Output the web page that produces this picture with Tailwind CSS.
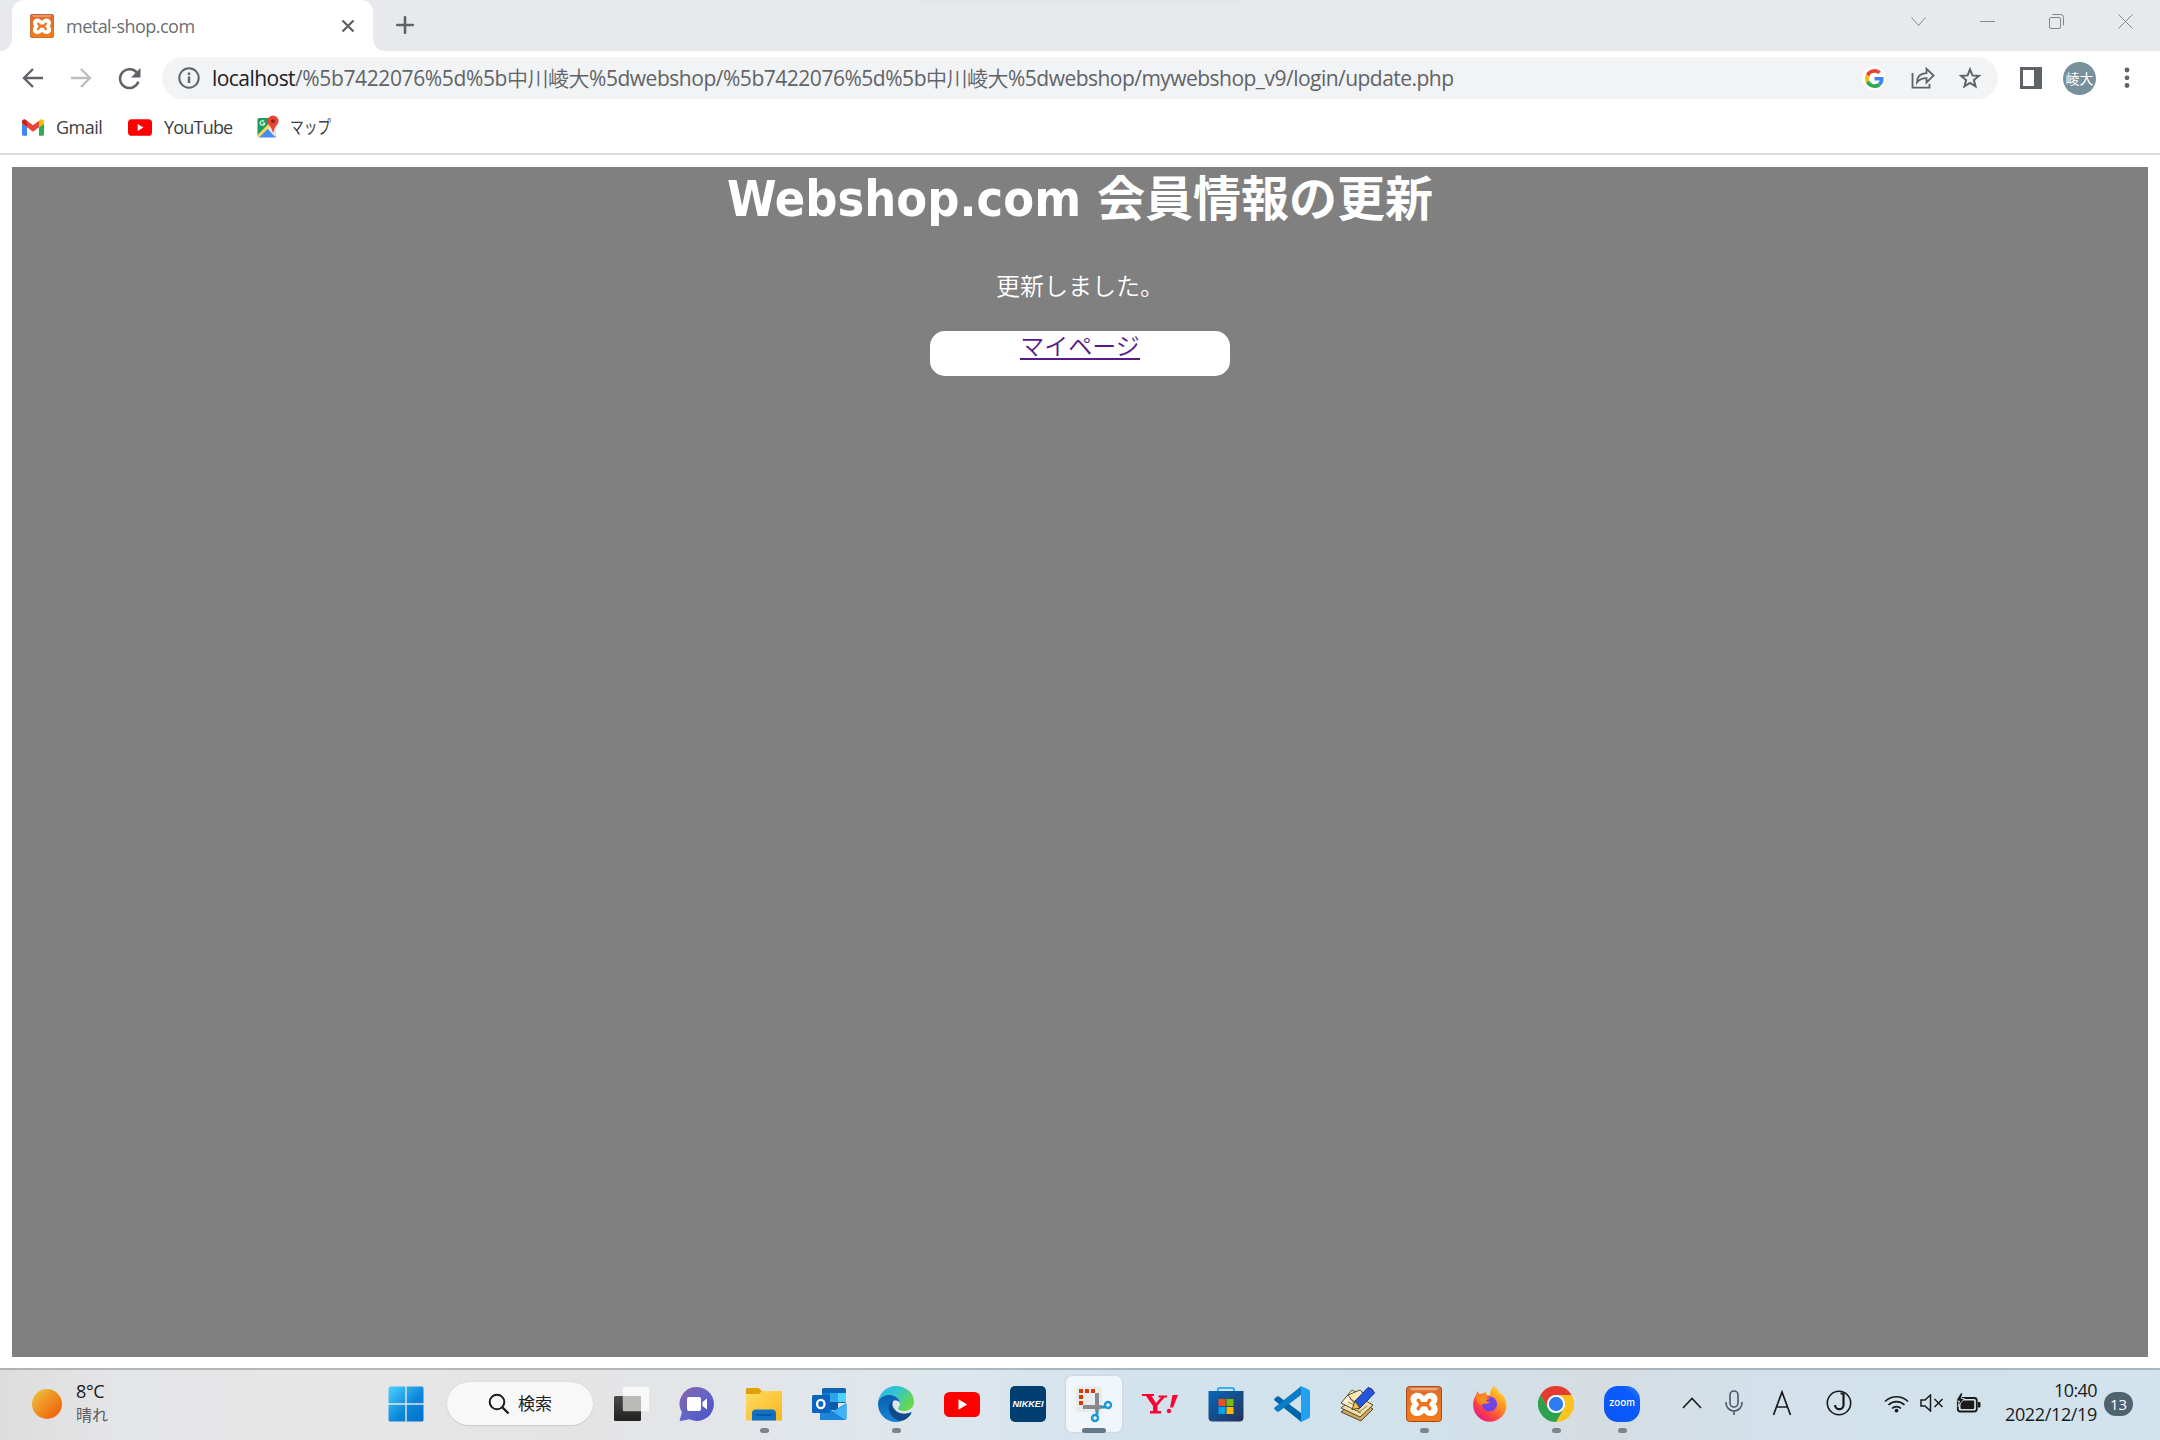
<!DOCTYPE html>
<html lang="ja">
<head>
<meta charset="utf-8">
<title>metal-shop.com</title>
<script src="https://cdn.jsdelivr.net/npm/@tailwindcss/browser@4"></script>
</head>
<body class="w-[2160px] h-[1440px] overflow-hidden flex flex-col bg-white font-['Open_Sans','Noto_Sans_CJK_JP',sans-serif]">

<svg class="absolute size-0">
  <defs>
    <linearGradient id="sun" x1="0" y1="0" x2="1" y2="1"><stop offset=".1" stop-color="#eebb38"/><stop offset=".8" stop-color="#f16a10"/></linearGradient>
    <linearGradient id="win" x1="0" y1="0" x2="1" y2="1"><stop offset="0" stop-color="#4cd0ff"/><stop offset=".6" stop-color="#0a84d8"/><stop offset="1" stop-color="#0070ca"/></linearGradient>
    <linearGradient id="chat" x1="0" y1="0" x2="1" y2="1"><stop offset="0" stop-color="#8f63a8"/><stop offset=".5" stop-color="#6264c8"/><stop offset="1" stop-color="#4a50c8"/></linearGradient>
    <linearGradient id="tv" x1="0" y1="0" x2="0" y2="1"><stop offset="0" stop-color="#4a4a48"/><stop offset="1" stop-color="#20201e"/></linearGradient>
    <linearGradient id="fold" x1="0" y1="0" x2="1" y2="1"><stop offset="0" stop-color="#ffdb66"/><stop offset="1" stop-color="#f8b71a"/></linearGradient>
    <linearGradient id="edgeTop" x1="0" y1="0" x2="1" y2=".5"><stop offset="0" stop-color="#2ab3ea"/><stop offset=".5" stop-color="#33c4d2"/><stop offset="1" stop-color="#66d94c"/></linearGradient>
    <linearGradient id="edgeMid" x1="0" y1="0" x2="0" y2="1"><stop offset="0" stop-color="#0d5cab"/><stop offset="1" stop-color="#1187dd"/></linearGradient>
    <linearGradient id="store" x1="0" y1="0" x2="1" y2="1"><stop offset="0" stop-color="#0468b8"/><stop offset="1" stop-color="#29305a"/></linearGradient>
    <linearGradient id="xa" x1="0" y1="0" x2="0" y2="1"><stop offset="0" stop-color="#d5713a"/><stop offset=".3" stop-color="#e8701e"/><stop offset="1" stop-color="#f47c1c"/></linearGradient>
    <linearGradient id="ff" x1="1" y1="0" x2=".2" y2="1"><stop offset="0" stop-color="#fff148"/><stop offset=".4" stop-color="#ff9a20"/><stop offset=".7" stop-color="#ff4a3c"/><stop offset="1" stop-color="#e8148a"/></linearGradient>
    <linearGradient id="zm" x1="1" y1="0" x2="0" y2="1"><stop offset="0" stop-color="#3f84e8"/><stop offset=".25" stop-color="#0b5cff"/><stop offset="1" stop-color="#0956f2"/></linearGradient>
    <symbol id="xampp" viewBox="0 0 36 36">
      <rect x=".5" y=".5" width="35" height="35" rx="3" fill="url(#xa)" stroke="#a84a14"/>
      <path d="M3.500 1.800h29l-2 2.500h-25z" fill="#f3a47c"/>
      <path d="M11.500 6.800c3 0 4.500 1.400 6.500 3.500c2-2.100 3.500-3.500 6.500-3.500c4 0 7 2.700 7 6.200c0 2.300-1 3.700-1.800 5.200c1.200 1.400 2 3 2 5.300c0 3.800-3 6.500-6.800 6.500c-3 0-5-1.200-6.900-3.300c-2 2.100-4 3.300-6.800 3.300c-3.900 0-6.900-2.700-6.900-6.500c0-2.300.8-3.900 2-5.300c-.9-1.500-1.800-2.900-1.800-5.200c0-3.500 3-6.200 7-6.200z" fill="#fff"/>
      <path d="M12.500 12.600c1.800 0 1.800 3.300 3.200 3.300h4.600c1.400 0 1.400-3.300 3.200-3.300c2.500 0 2.500 3 .6 3.800c-1.200.6-1.200 3.200 0 3.800c1.900 1 1.900 4.200-.6 4.200c-1.800 0-1.800-3.900-3.200-3.900h-4.600c-1.400 0-1.400 3.900-3.200 3.900c-2.500 0-2.500-3.200-.6-4.200c1.200-.6 1.200-3.200 0-3.800c-1.900-.8-1.900-3.800.6-3.800z" fill="#ee7420"/>
    </symbol>
    <symbol id="ytlogo" viewBox="0 0 36 25">
      <rect width="36" height="25" rx="5.500" fill="#f00"/><path d="M14.500 7.300v10.400l8.700-5.200z" fill="#fff"/>
    </symbol>
  </defs>
</svg>

<!-- tab strip -->
<header class="h-[51px] shrink-0 bg-[#e8e9ed] flex items-stretch relative">
  <div class="w-3 bg-white"><div class="h-full bg-[#e8e9ed] rounded-br-[12px]"></div></div>
  <div class="w-[361px] bg-white rounded-t-[12px] flex items-center pl-[18px] pr-[17px]">
    <svg class="size-6"><use href="#xampp"/></svg>
    <span class="ml-3 text-[18px] leading-6 tracking-[-0.52px] text-[#6b6e72] whitespace-nowrap">metal-shop.com</span>
    <svg class="ml-auto size-[16px]" viewBox="0 0 16 16" stroke="#5f6368" stroke-width="2.300"><path d="M2.500 2.500l11 11M13.500 2.500l-11 11"/></svg>
  </div>
  <div class="w-3 bg-white"><div class="h-full bg-[#e8e9ed] rounded-bl-[12px]"></div></div>
  <svg class="ml-[11px] mt-4 size-[18px]" viewBox="0 0 18 18" stroke="#5f6368" stroke-width="2.600" stroke-linecap="round"><path d="M9 1.200v15.600M1.200 9h15.600"/></svg>
  <div class="absolute left-[918px] top-0 w-[324px] h-[3px] bg-[#e4e5e9]"></div>
  <div class="ml-auto flex items-start pt-[14px] pr-[27px] gap-[54px]">
    <svg class="w-[15px] h-4" viewBox="0 0 15 16" fill="none" stroke="#85878b"><path d="M.5 3.500l7 8 7-8"/></svg>
    <svg class="w-[15px] h-4" viewBox="0 0 15 16" fill="none" stroke="#85878b"><path d="M0 7.500h15"/></svg>
    <svg class="w-[15px] h-4" viewBox="0 0 15 16" fill="none" stroke="#85878b"><rect x=".5" y="3.500" width="11" height="11" rx="1.500"/><path d="M3.500 .5h8a3 3 0 0 1 3 3v8"/></svg>
    <svg class="w-[15px] h-4" viewBox="0 0 15 16" fill="none" stroke="#85878b"><path d="M.5.500l14 14M14.500 .5l-14 14"/></svg>
  </div>
</header>

<!-- toolbar -->
<div class="h-[54px] shrink-0 flex items-center pl-[22px]">
  <svg class="size-[22px]" viewBox="0 0 22 22" fill="none" stroke="#5f6368" stroke-width="2.400"><path d="M21 11H3M11 2l-9 9 9 9"/></svg>
  <svg class="ml-[26px] size-[22px]" viewBox="0 0 22 22" fill="none" stroke="#bcbec0" stroke-width="2.400"><path d="M1 11h18M11 2l9 9-9 9"/></svg>
  <svg class="ml-[26px] size-[23px]" viewBox="0 0 22 22" fill="none" stroke="#5f6368" stroke-width="2.400"><path d="M18.700 6.500A9 9 0 1 0 19.500 14"/><path d="M21.500 1v9h-9z" fill="#5f6368" stroke="none"/></svg>
  <div class="ml-[21px] w-[1836px] h-[42px] rounded-full bg-[#f1f3f4] flex items-center pl-4">
    <svg class="size-[22px] shrink-0" viewBox="0 0 22 22" fill="none" stroke="#5f6368" stroke-width="2"><circle cx="11" cy="11" r="9.700"/><path d="M11 9.500v6.500M11 5.500v2.400" stroke-width="2.400"/></svg>
    <div class="ml-[12px] flex text-[21px] leading-[30px] text-[#5f6368] whitespace-pre">
      <span class="tracking-[-0.55px] text-[#202124]">localhost</span>
      <span class="tracking-[-0.377px]">/%5b7422076%5d%5b</span>
      <span class="tracking-[-0.5px] font-[350]">中川崚大</span>
      <span class="tracking-[-0.478px]">%5dwebshop/%5b7422076%5d%5b</span>
      <span class="tracking-[-0.5px] font-[350]">中川崚大</span>
      <span class="tracking-[-0.53px]">%5dwebshop/mywebshop_v9/login/update.php</span>
    </div>
    <div class="ml-auto mr-[16px] flex items-center">
      <div class="size-6 rounded-full bg-white flex items-center justify-center">
        <svg class="size-[19px]" viewBox="0 0 48 48"><path fill="#EA4335" d="M24 9.500c3.540 0 6.710 1.220 9.210 3.600l6.850-6.850C35.900 2.380 30.470 0 24 0 14.620 0 6.510 5.380 2.560 13.220l7.980 6.190C12.430 13.720 17.740 9.500 24 9.500z"/><path fill="#4285F4" d="M46.980 24.550c0-1.570-.15-3.090-.38-4.550H24v9.020h12.940c-.58 2.960-2.260 5.480-4.780 7.180l7.730 6c4.510-4.180 7.090-10.360 7.090-17.650z"/><path fill="#FBBC05" d="M10.530 28.590c-.48-1.450-.76-2.990-.76-4.590s.27-3.140.76-4.590l-7.980-6.190C.92 16.460 0 20.120 0 24c0 3.880.92 7.540 2.560 10.780l7.970-6.190z"/><path fill="#34A853" d="M24 48c6.480 0 11.930-2.130 15.890-5.810l-7.730-6c-2.150 1.450-4.920 2.300-8.160 2.300-6.260 0-11.570-4.220-13.470-9.910l-7.980 6.190C6.510 42.620 14.620 48 24 48z"/></svg>
      </div>
      <svg class="ml-[25px] w-[24px] h-[22px]" viewBox="0 0 24 22" fill="none" stroke="#5f6368" stroke-width="1.800"><path d="M1.500 6v14.700h17V17"/><path d="M15.500 1.800v4.400C9.500 6.500 6 10 6 15.500c2.300-3 5-4.300 9.500-4.300v4.300L22.500 8.600z"/></svg>
      <svg class="ml-[23px] size-[24px]" viewBox="0 0 24 24" fill="none" stroke="#5f6368" stroke-width="2"><path d="M12 3.400l2.400 6 6.500.5-5 4.200 1.600 6.300-5.500-3.400-5.500 3.400 1.600-6.300-5-4.200 6.500-.5z"/></svg>
    </div>
  </div>
  <svg class="ml-[22px] size-[22px]" viewBox="0 0 22 22"><path fill="#5f6368" fill-rule="evenodd" d="M0 0h22v22H0zM3 3v16h11V3z"/></svg>
  <div class="ml-[21px] size-[33px] rounded-full bg-[#78909c] text-white text-[14px] leading-[33px] text-center whitespace-nowrap">崚大</div>
  <svg class="ml-[28px] w-[6px] h-[22px]" viewBox="0 0 6 22" fill="#5f6368"><circle cx="3" cy="3" r="2.400"/><circle cx="3" cy="10.800" r="2.400"/><circle cx="3" cy="18.500" r="2.400"/></svg>
</div>

<!-- bookmarks -->
<nav class="h-[50px] shrink-0 border-b-2 border-[#dadbdc] flex items-center pb-[4px] pl-[22px] text-[18px] leading-6 text-[#3c4043] whitespace-nowrap">
  <svg class="w-[22px] h-[17px]" viewBox="52 42 88 66"><path fill="#4285f4" d="M58 108h14V74L52 59v43c0 3.320 2.690 6 6 6"/><path fill="#34a853" d="M120 108h14c3.320 0 6-2.690 6-6V59l-20 15"/><path fill="#fbbc04" d="M120 48v26l20-15v-8c0-7.420-8.470-11.650-14.400-7.200"/><path fill="#ea4335" d="M72 74V48l24 18 24-18v26L96 92"/><path fill="#c5221f" d="M52 51v8l20 15V48l-5.600-4.200c-5.940-4.450-14.400-.22-14.400 7.200"/></svg>
  <span class="ml-[12px] w-[47px] tracking-[-0.5px]">Gmail</span>
  <svg class="ml-[25px] w-6 h-[17px]"><use href="#ytlogo"/></svg>
  <span class="ml-[12px] w-[68px] tracking-[-0.8px]">YouTube</span>
  <svg class="ml-[24px] w-[24px] h-[24px]" viewBox="0 0 24 24"><path d="M3 3h11l6 8v11H3q-1.500 0-1.500-1.500v-16Q1.500 3 3 3z" fill="#1e9d5a"/><path d="M11 13l9-4v11q0 2-2 2z" fill="#e3e3e3"/><path d="M3 22.500l8.500-8.500 8 8.500z" fill="#4a8af4"/><path d="M2 21.500L15 8.500" stroke="#fdd663" stroke-width="3"/><path d="M17 .5a5.600 5.600 0 0 1 5.600 5.600c0 3.900-4.500 5.400-5.100 11h-1c-.6-5.600-5.100-7.100-5.100-11A5.600 5.600 0 0 1 17 .5z" fill="#ea4335"/><circle cx="17" cy="6.200" r="1.900" fill="#8c1f17"/><path d="M8 6.300a2.300 2.300 0 1 0 .7 2H6.600" fill="none" stroke="#fff" stroke-width="1.100"/></svg>
  <span class="ml-[10px] inline-block origin-left scale-x-[0.76]">マップ</span>
</nav>

<!-- page -->
<main class="h-[1213px] shrink-0 px-3 pt-3 pb-[11px]">
  <div class="h-full bg-[#808080] text-white flex flex-col items-center">
    <h1 class="mt-[-4px] h-[72px] leading-[72px] font-bold whitespace-nowrap flex">
      <span class="w-[370px] text-[50px] font-['DejaVu_Sans_Condensed','DejaVu_Sans',sans-serif] [font-stretch:condensed]">Webshop.com</span>
      <span class="text-[48px] leading-[64px] font-['Noto_Sans_CJK_JP',sans-serif]">会員情報の更新</span>
    </h1>
    <p class="mt-[32px] text-[24px] leading-[36px] font-[350] font-['Noto_Sans_CJK_JP',sans-serif]">更新しました。</p>
    <div class="mt-[28px] w-[300px] h-[45px] rounded-[15px] bg-white text-center">
      <a href="#" class="inline-block h-[29px] border-b-2 border-[#551a8b] text-[#551a8b] text-[24px] leading-[28px] font-[350] font-['Noto_Sans_CJK_JP',sans-serif]">マイページ</a>
    </div>
  </div>
</main>

<!-- taskbar -->
<footer class="h-[72px] shrink-0 border-t-2 border-black/20 flex items-center pb-[2px] relative bg-[linear-gradient(90deg,#dddddd_0px,#e4e5e7_120px,#e6e6e6_400px,#e4e4e5_580px,#e2e6ea_760px,#dce6ed_960px,#d3e3ed_1120px,#d1e2eb_1420px,#d6dde2_1600px,#d2e1ea_1760px,#d2e3ed_2160px)]">
  <div class="w-[388px] pl-8 flex items-center">
    <svg class="size-[30px]" viewBox="0 0 30 30"><circle cx="15" cy="15" r="15" fill="url(#sun)"/></svg>
    <div class="ml-[14px] -mt-[2px] text-[18px] leading-6 text-[#1a1a1a]">
      <div class="tracking-[-0.4px]">8°C</div>
      <div class="text-[16px] text-[#5c5c5c]">晴れ</div>
    </div>
  </div>
  <svg class="size-[36px]" viewBox="0 0 36 36"><path d="M2 .5h15.300v16.800H.5V2zM18.700.500H34a1.500 1.500 0 0 1 1.500 1.500v15.300H18.700zM.5 18.700h16.800v16.800H2A1.500 1.500 0 0 1 .5 34zM18.700 18.700h16.800V34a1.500 1.500 0 0 1-1.500 1.500H18.700z" fill="url(#win)"/></svg>
  <div class="ml-[23px] w-[146px] h-[44px] rounded-full bg-[#f8f8f8] border-b border-[#d0d0d0] shadow-[0_0_1px_#bbb] flex items-center justify-center gap-2 text-[17px] text-[#202020]">
    <svg class="size-[22px]" viewBox="0 0 22 22" fill="none" stroke="#1d1d1d" stroke-width="2"><circle cx="9" cy="9" r="7.300"/><path d="M14 14l6.500 6.500" stroke-width="2.400"/></svg>
    <span>検索</span>
  </div>
  <svg class="ml-[20px] w-[38px] h-[36px]" viewBox="0 0 38 36"><rect x="1" y="10" width="27" height="25" rx="1.500" fill="url(#tv)"/><rect x="10" y="1" width="26" height="24" rx="1" fill="#fff" fill-opacity=".72" stroke="#fff" stroke-opacity=".3"/><rect x="10" y="10" width="18" height="15" fill="#b6b6b4" fill-opacity=".8"/></svg>
  <svg class="ml-[28px] size-[36px]" viewBox="0 0 36 36"><path d="M18 1a17 17 0 1 1-7.500 32.300L1.500 35c-1 0-1-.8-.6-1.500l2-7A17 17 0 0 1 18 1z" fill="url(#chat)"/><rect x="8" y="11" width="14" height="14" rx="2" fill="#fff"/><path d="M23.500 16l4.500-3.500v11L23.500 20z" fill="#fff"/></svg>
  <div class="ml-4 flex items-center h-[70px]">
    <div class="relative w-[66px] h-[70px] flex items-center justify-center">
      <svg class="size-[36px]" viewBox="0 0 36 36"><path d="M0 3.500A1.500 1.500 0 0 1 1.500 2h11L16 5v4H0z" fill="#e0a000"/><path d="M0 8h13l3-3h18.500A1.500 1.500 0 0 1 36 6.500V34.500H0z" fill="url(#fold)"/><path d="M6 34.500v-7a4 4 0 0 1 4-4h16a4 4 0 0 1 4 4v7z" fill="#0f72c6"/><path d="M10 29h16" stroke="#0a4f92" stroke-width="1.500"/></svg>
      <div class="absolute left-[29px] bottom-[6px] w-[9px] h-[5px] rounded-full bg-[#7f8488]"></div>
    </div>
    <div class="w-[66px] h-[70px] flex items-center justify-center">
      <svg class="size-[36px]" viewBox="0 0 36 36"><rect x="10" y="2" width="24" height="15" rx="1.500" fill="#0f64b8"/><path d="M10 7h8v9h-8z" fill="#1477cc"/><path d="M18 7h8v9h-8z" fill="#2aa6ea"/><path d="M26 7h8v9h-8z" fill="#51d0fa"/><path d="M18 16h8v8h-8z" fill="#0a5aa8"/><path d="M8 17l13 8 13.500-8v15a2 2 0 0 1-2 2H10a2 2 0 0 1-2-2z" fill="#2b98e4"/><path d="M8 34L34.500 18v14a2 2 0 0 1-2 2z" fill="#3eb2f4"/><path d="M8 17l25 16.700-1 .3H8z" fill="#1c86dc"/><rect x="0" y="9" width="18" height="18" rx="1.500" fill="#0c63bf"/><ellipse cx="8.800" cy="18" rx="3.700" ry="4.200" fill="none" stroke="#fff" stroke-width="2.300"/></svg>
    </div>
    <div class="relative w-[66px] h-[70px] flex items-center justify-center">
      <svg class="size-[36px]" viewBox="0 0 36 36"><path d="M0 18C0 8 8 0 18 0s18 7 18 15.500c0 6-4.500 9.500-9.500 9.500-4 0-6.500-1.300-6.500-2.800 0-.8 2-1.700 2-4.400 0-3.200-3-6.500-8-7.500C7 9 1 12.500 0 18z" fill="url(#edgeTop)"/><path d="M0 18c.5-5.500 5-9 11-9 5.800 0 10.900 3.800 11 8.500-1-2-3-3.200-5-3.200-4 1.200-5 5.200-4 9.200 1.300 6 6.500 9.500 11 11-1.800 1-4 1.500-6 1.500C8 36 0 28 0 18z" fill="url(#edgeMid)"/><path d="M15.500 14.500c-3.500 1.500-5.500 5-4.500 9.500C12.500 31 19 35.500 24.500 34.800c4-1.300 7-4 9-7.800.3-.6-.2-1-.8-.7C26 29.500 18 27 15.300 21.500c-1.200-2.500-1.200-5 .2-7z" fill="#114a8b"/></svg>
      <div class="absolute left-[29px] bottom-[6px] w-[9px] h-[5px] rounded-full bg-[#7f8488]"></div>
    </div>
    <div class="w-[66px] h-[70px] flex items-center justify-center"><svg class="w-[36px] h-[25px]"><use href="#ytlogo"/></svg></div>
    <div class="w-[66px] h-[70px] flex items-center justify-center">
      <svg class="size-[36px]" viewBox="0 0 36 36"><rect width="36" height="36" rx="5" fill="#003e70"/><text x="18" y="21.300" text-anchor="middle" textLength="31" lengthAdjust="spacingAndGlyphs" font-family="Liberation Sans, sans-serif" font-size="9.500" font-weight="700" font-style="italic" fill="#fff">NIKKEI</text></svg>
    </div>
    <div class="relative w-[66px] h-[70px] flex items-center justify-center">
      <div class="size-[56px] rounded-md bg-[#f1f6fa] shadow-[0_0_2px_#b4c0c8] flex items-center justify-center">
        <svg class="size-[40px]" viewBox="0 0 40 40"><rect x="2" y="2" width="26" height="26" rx="2" fill="#e8ebee"/><g fill="#d83b01"><path d="M5 5h4v4H5zM11 5h4v4h-4zM17 5h4v4h-4zM5 11h4v4H5zM5 17h4v4H5z"/></g><path d="M23 9v18M9 23h18" stroke="#87898c" stroke-width="4"/><circle cx="34" cy="21" r="3" fill="#fff" stroke="#1f97d8" stroke-width="2.500"/><circle cx="21" cy="34" r="3" fill="#fff" stroke="#1f97d8" stroke-width="2.500"/><path d="M27 23h4M23 27v4" stroke="#1f97d8" stroke-width="3"/></svg>
      </div>
      <div class="absolute left-[21px] bottom-[6px] w-[24px] h-[5px] rounded-full bg-[#647987]"></div>
    </div>
    <div class="w-[66px] h-[70px] flex items-center justify-center">
      <svg class="w-[36px] h-[22px]" viewBox="0 0 36 22"><g fill="#ff0033"><path d="M0 1h12v2h-2.500l4.500 7 5-5.500h-2.500v-2H25v2h-2.500L15.500 12.500V18H19v2.500H8V18h3v-5L4 3H0z"/><path d="M30.500 2H36l-5 12.500h-3z"/><circle cx="27" cy="18" r="2.200"/></g></svg>
    </div>
    <div class="w-[66px] h-[70px] flex items-center justify-center">
      <svg class="size-[36px]" viewBox="0 0 36 36"><path d="M10 7V3.500A1.500 1.500 0 0 1 11.500 2h13A1.500 1.500 0 0 1 26 3.500V7" fill="none" stroke="#30b4ee" stroke-width="2.200"/><path d="M.5 5h35v26.500a4 4 0 0 1-4 4h-27a4 4 0 0 1-4-4z" fill="url(#store)"/><path fill="#f25022" d="M10.500 13H17.500v7H10.500z"/><path fill="#7fba00" d="M18.500 13H25.500v7H18.500z"/><path fill="#00a4ef" d="M10.500 21H17.500v7H10.500z"/><path fill="#ffb900" d="M18.500 21H25.500v7H18.500z"/></svg>
    </div>
    <div class="w-[66px] h-[70px] flex items-center justify-center">
      <svg class="size-[36px]" viewBox="0 0 36 36"><path d="M.6 12.500L3 10.500q1-.7 2 0L27 27v8.500q-.9-.3-1.500-1L.6 14.500q-.8-1 0-2z" fill="#0065a9"/><path d="M.6 23.500L3 25.600q1 .7 2 0L27 9V.500q-.9.300-1.500 1L.6 21.500q-.8 1 0 2z" fill="#0a7cc8"/><path d="M26 .3q.7-.4 1.500 0L34.500 3.500q1.500.7 1.500 2v25q0 1.400-1.500 2L27.500 35.700q-1 .5-2-.3 1.500.3 1.500-1.400V2q0-1.700-1.500-1.400z" fill="#24a0f0"/></svg>
    </div>
    <div class="w-[66px] h-[70px] flex items-center justify-center">
      <svg class="size-[36px]" viewBox="0 0 36 36" stroke="#4a3a1c" stroke-width=".9" stroke-linejoin="round"><path d="M1 26l20 9 12-12-15-10z" fill="#c9a860"/><path d="M1 22l19 9 13-12-16-9z" fill="#f0dfa8"/><path d="M1 17l16 8 11-12L12 4z" fill="#fff3cf"/><path d="M8 9l12-5 9 9-12 8z" fill="#fbe9b5"/><path d="M10 13l8 4M8 16l8 4M18 27l9-7M16 24l5 3" stroke="#8a6c34"/><path d="M15 15L28 1.500q4 0 6.500 5.500L20 22z" fill="#2456dc" stroke="#122c80"/><path d="M15 15l5 7-8 1.500z" fill="#f2c14a"/></svg>
    </div>
    <div class="relative w-[66px] h-[70px] flex items-center justify-center">
      <svg class="size-[36px]"><use href="#xampp"/></svg>
      <div class="absolute left-[29px] bottom-[6px] w-[9px] h-[5px] rounded-full bg-[#7f8488]"></div>
    </div>
    <div class="w-[66px] h-[70px] flex items-center justify-center">
      <svg class="size-[36px]" viewBox="0 0 36 36"><path d="M22 0c3 2 4.500 4 5 6.500 4 2 7.500 6.500 7.500 12.500a16.700 16.700 0 0 1-33.400 0c0-4 1-7.500 3.400-11 0-1 .5-2 1.500-3 .2 1.500.8 2.500 1.500 3.300C9 7.500 11 7 12 7.300c1-1 2-1.500 2.500-1.500-.4 1.200-.4 2.300.2 3.200L18 9c0-4 1.500-7 4-9z" fill="url(#ff)"/><circle cx="17.500" cy="18" r="7.600" fill="#7542e5"/><path d="M5 8.500c2 2 5 1 8 2 1.500.8 3 1.500 5.500 1.200-1 1.300-3.500 1.500-4.500 3.300 1 .8 3 .7 4 1.200-3 2.300-6 .5-8.500 2.800C5 18 3.500 12 5 8.500z" fill="#ff8a1e"/></svg>
    </div>
    <div class="relative w-[66px] h-[70px] flex items-center justify-center">
      <svg class="size-[36px]" viewBox="0 0 36 36"><path d="M2.410 9A18 18 0 0 1 33.590 9H18a9 9 0 0 0-7.800 13.500z" fill="#e33b2e"/><path d="M33.590 9A18 18 0 0 1 18 36l7.800-13.500A9 9 0 0 0 18 9z" fill="#fcc31e"/><path d="M18 36A18 18 0 0 1 2.410 9l7.800 13.500a9 9 0 0 0 15.600 0z" fill="#2da04e"/><circle cx="18" cy="18" r="9" fill="#fff"/><circle cx="18" cy="18" r="7.200" fill="#2f7cf0"/></svg>
      <div class="absolute left-[29px] bottom-[6px] w-[9px] h-[5px] rounded-full bg-[#7f8488]"></div>
    </div>
    <div class="relative w-[66px] h-[70px] flex items-center justify-center">
      <svg class="size-[36px]" viewBox="0 0 36 36"><rect width="36" height="36" rx="14" fill="url(#zm)"/><text x="18" y="20.300" text-anchor="middle" textLength="26" lengthAdjust="spacingAndGlyphs" font-family="Inter, sans-serif" font-size="9.500" font-weight="500" fill="#fff">zoom</text></svg>
      <div class="absolute left-[29px] bottom-[6px] w-[9px] h-[5px] rounded-full bg-[#7f8488]"></div>
    </div>
  </div>
  <div class="ml-[27px] -mt-[2px] flex items-center text-[#1a1a1a]">
    <svg class="w-[20px] h-[12px]" viewBox="0 0 20 12" fill="none" stroke="#1a1a1a" stroke-width="1.600"><path d="M1 11l9-9.500L19 11"/></svg>
    <svg class="ml-[23px] w-[18px] h-[26px]" viewBox="0 0 18 26" fill="none" stroke="#4a5a66" stroke-width="1.600"><rect x="5" y="1" width="8" height="16" rx="4"/><path d="M1 12v1a8 8 0 0 0 16 0v-1M9 21v4"/></svg>
    <svg class="ml-[29px] w-[20px] h-[26px]" viewBox="0 0 20 26" fill="none" stroke="#1a1a1a" stroke-width="1.700"><path d="M1.500 25L10 2l8.500 23M4.500 17h11"/></svg>
    <svg class="ml-[34px] size-[26px]" viewBox="0 0 26 26" fill="none" stroke="#1a1a1a" stroke-width="1.600"><circle cx="13" cy="13" r="11.700"/><path d="M14.500 3.500h4M17.500 3.500v11.500a4.200 4.200 0 0 1-8.400 0" stroke-width="2.200"/></svg>
    <svg class="ml-[32px] w-[25px] h-[19px]" viewBox="0 0 25 19" fill="none" stroke="#1a1a1a" stroke-width="1.700"><path d="M1 7.500a16.300 16.300 0 0 1 23 0M4.500 11a11.400 11.400 0 0 1 16 0M8 14.500a6.400 6.400 0 0 1 9 0"/><circle cx="12.500" cy="16.600" r="1.900" fill="#1a1a1a" stroke="none"/></svg>
    <svg class="ml-[11px] w-[24px] h-[18px]" viewBox="0 0 24 18" fill="none" stroke="#1a1a1a" stroke-width="1.500"><path d="M1 6v6h4l5.500 5V1L5 6zM14.500 5l8 8M22.500 5l-8 8"/></svg>
    <svg class="ml-[12px] w-[25px] h-[20px]" viewBox="0 0 25 20"><rect x="1.800" y="5" width="19" height="13.500" rx="2.500" fill="none" stroke="#1a1a1a" stroke-width="1.800"/><rect x="4.500" y="7.500" width="13.700" height="8.500" rx="1" fill="#1a1a1a"/><path d="M22 9h1.500q1 0 1 1v3.500q0 1-1 1H22z" fill="#1a1a1a"/><path d="M4.500 0L0 8h3.500L2 13.500l6.500-8H5.200L7 0z" fill="#1a1a1a" stroke="#d2e3ed" stroke-width=".8"/></svg>
  </div>
  <div class="absolute right-[63px] top-[8px] flex flex-col items-end text-[18px] leading-6 text-[#1a1a1a]">
    <div class="tracking-[-0.6px]">10:40</div>
    <div class="tracking-[-0.35px]">2022/12/19</div>
  </div>
  <div class="absolute left-[2104px] top-[22px] w-[29px] h-6 rounded-full bg-[#4f6270] text-white text-[15px] leading-6 text-center">13</div>
</footer>
</body>
</html>
